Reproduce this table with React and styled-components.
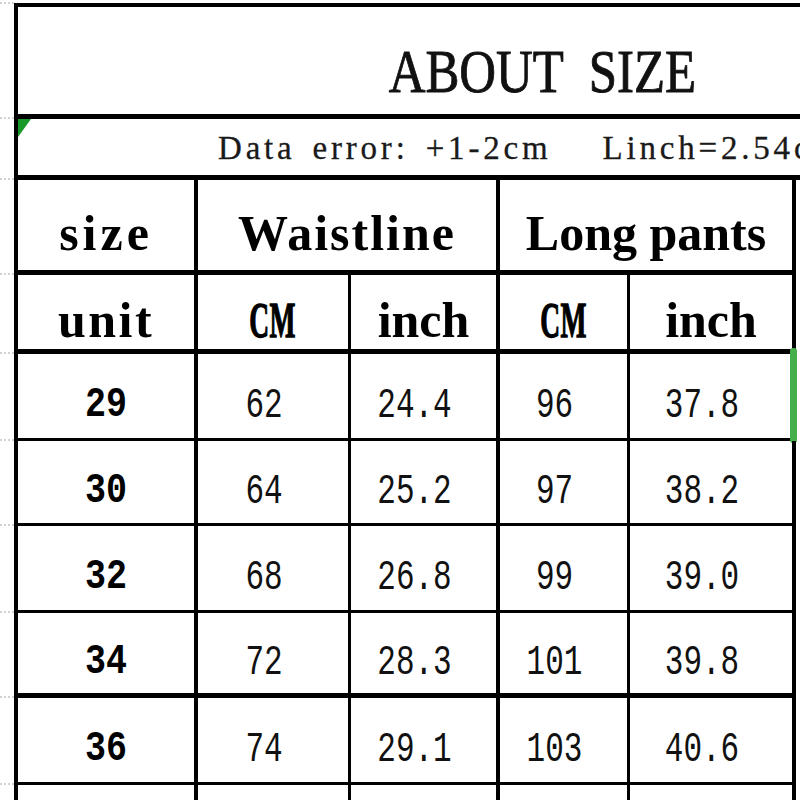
import React from "react";
import styled, { createGlobalStyle } from "styled-components";

const GlobalStyle = createGlobalStyle`
  html, body {
    margin: 0;
    padding: 0;
    background: #fff;
  }
  body {
    width: 800px;
    height: 800px;
    overflow: hidden;
    font-family: "Liberation Serif", "Times New Roman", serif;
    color: #000;
  }
`;

const Page = styled.div`
  display: flex;
  width: 1066px;
  height: 800px;
  padding-top: 3px;
  box-sizing: border-box;
`;

const Gutter = styled.div`
  width: 14px;
  flex: none;
  display: flex;
  flex-direction: column;
  border-top: 2px dotted #d2d2d2;
  margin-top: -1px;
`;

const GutterRow = styled.div`
  height: ${(p) => p.$h}px;
  box-sizing: border-box;
  border-bottom: 2px dotted #d2d2d2;
  flex: none;
`;

const Sheet = styled.div`
  flex: 1;
  display: flex;
  flex-direction: column;
  border-left: 4px solid #000;
`;

const Banner = styled.div`
  position: relative;
  height: ${(p) => p.$h}px;
  flex: none;
  box-sizing: border-box;
  border-top: ${(p) => p.$top || 0}px solid #000;
  border-bottom: 5px solid #000;
  display: flex;
  align-items: center;
  justify-content: ${(p) => (p.$left ? "flex-start" : "center")};
  padding-top: ${(p) => p.$shift || 0}px;
  padding-left: ${(p) => p.$left || 0}px;
`;

const Title = styled.span`
  display: inline-block;
  font-family: "Liberation Serif", serif;
  font-size: 62px;
  line-height: 1;
  color: #111;
  word-spacing: 16px;
  -webkit-text-stroke: 0.9px #111;
  transform: scaleX(0.82);
  white-space: pre;
`;

const Note = styled.span`
  display: inline-block;
  font-family: "Liberation Serif", serif;
  font-size: 33px;
  line-height: 1;
  color: #1a1a1a;
  letter-spacing: 3.8px;
  word-spacing: 5px;
  -webkit-text-stroke: 0.3px #1a1a1a;
  white-space: pre;
`;

const Corner = styled.div`
  position: absolute;
  left: 0;
  top: 0;
  width: 0;
  height: 0;
  border-top: 18px solid #17992a;
  border-right: 13px solid transparent;
`;

const Row = styled.div`
  position: relative;
  display: grid;
  grid-template-columns: 180px 153px 149px 130px 166px;
  width: 778px;
  height: ${(p) => p.$h}px;
  flex: none;
  box-sizing: border-box;
  border-bottom: ${(p) => p.$line || 0}px solid #000;
`;

const Cell = styled.div`
  grid-column: span ${(p) => p.$span || 1};
  display: flex;
  align-items: center;
  justify-content: center;
  box-sizing: border-box;
  border-right: ${(p) => p.$edge}px solid #000;
  padding-top: ${(p) => p.$shift || 0}px;
  padding-right: ${(p) => p.$right || 0}px;
`;

const Head = styled.span`
  display: inline-block;
  font-family: "Liberation Serif", serif;
  font-weight: bold;
  font-size: 50px;
  line-height: 1;
  letter-spacing: ${(p) => p.$ls ?? 2}px;
  -webkit-text-stroke: ${(p) => (p.$sx ? 1.3 : 0)}px #000;
  transform: scaleX(${(p) => p.$sx || 1});
  white-space: pre;
`;

const Num = styled.span`
  display: inline-block;
  font-family: "Liberation Mono", monospace;
  font-weight: ${(p) => (p.$bold ? "bold" : "normal")};
  font-size: ${(p) => (p.$bold ? 35 : 31)}px;
  line-height: 1;
  color: ${(p) => (p.$bold ? "#000" : "#111")};
  transform: scaleY(${(p) => (p.$bold ? 1.22 : 1.35)});
`;

const Selection = styled.div`
  position: absolute;
  left: 772px;
  top: -6px;
  width: 7px;
  height: 95px;
  background: #45b04a;
  border-radius: 3px;
`;

const EDGES = [4, 3, 4, 3, 4];

const units = [
  { t: "CM", sx: 0.55, ls: 1 },
  { t: "inch", ls: 0 },
  { t: "CM", sx: 0.55, ls: 1 },
  { t: "inch", ls: 0 },
];

const rows = [
  { size: "29", vals: ["62", "24.4", "96", "37.8"], h: 87, line: 3 },
  { size: "30", vals: ["64", "25.2", "97", "38.2"], h: 85, line: 3 },
  { size: "32", vals: ["68", "26.8", "99", "39.0"], h: 87, line: 3 },
  { size: "34", vals: ["72", "28.3", "101", "39.8"], h: 85, line: 5 },
  { size: "36", vals: ["74", "29.1", "103", "40.6"], h: 87, line: 3 },
];

const gutter = [116, 61, 95, 79, 87, 85, 87, 85, 87, 40];

export default function App() {
  return (
    <>
      <GlobalStyle />
      <Page>
        <Gutter>
          {gutter.map((h, i) => (
            <GutterRow key={i} $h={i === 0 ? h - 1 : h} />
          ))}
        </Gutter>
        <Sheet>
          <Banner $h={116} $top={4} $shift={21}>
            <Title>ABOUT SIZE</Title>
          </Banner>
          <Banner $h={61} $left={200} $shift={2}>
            <Corner />
            <Note>Data error: +1-2cm   Linch=2.54cm</Note>
          </Banner>

          <Row $h={95} $line={5}>
            <Cell $edge={4} $shift={16}>
              <Head $ls={4}>size</Head>
            </Cell>
            <Cell $edge={4} $span={2} $shift={16}>
              <Head>Waistline</Head>
            </Cell>
            <Cell $edge={4} $span={2} $shift={16}>
              <Head $ls={0}>Long pants</Head>
            </Cell>
          </Row>
          <Row $h={79} $line={5}>
            <Cell $edge={4} $shift={16}>
              <Head $ls={2.5}>unit</Head>
            </Cell>
            {units.map((u, i) => (
              <Cell key={i} $edge={EDGES[i + 1]} $shift={16}>
                <Head $sx={u.sx} $ls={u.ls}>
                  {u.t}
                </Head>
              </Cell>
            ))}
          </Row>

          {rows.map((r, idx) => (
            <Row key={r.size} $h={r.h} $line={r.line}>
              {idx === 0 && <Selection />}
              <Cell $edge={4} $shift={18}>
                <Num $bold>{r.size}</Num>
              </Cell>
              {r.vals.map((v, i) => (
                <Cell key={i} $edge={EDGES[i + 1]} $shift={18} $right={18}>
                  <Num>{v}</Num>
                </Cell>
              ))}
            </Row>
          ))}

          <Row $h={30}>
            {EDGES.map((e, i) => (
              <Cell key={i} $edge={e} />
            ))}
          </Row>
        </Sheet>
      </Page>
    </>
  );
}
